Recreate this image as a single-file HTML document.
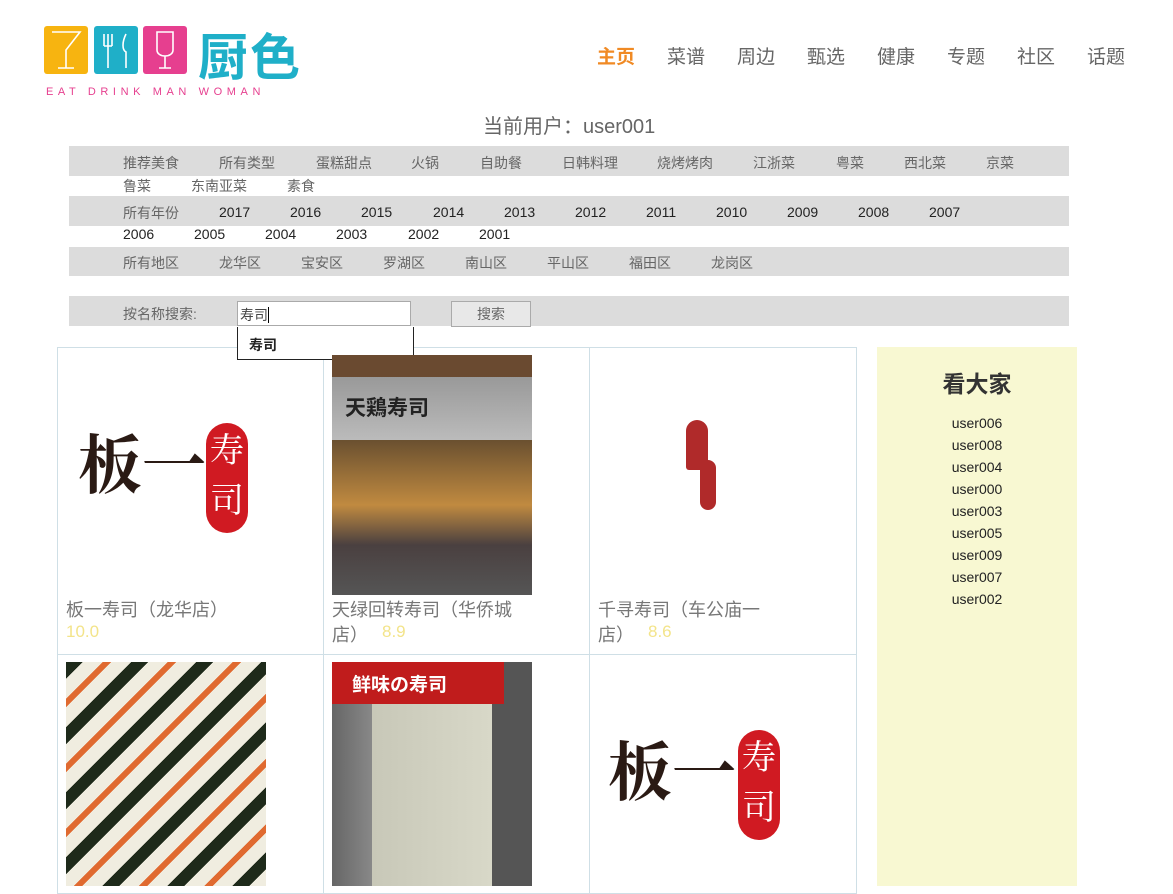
<!DOCTYPE html>
<html><head><meta charset="utf-8"><style>
*{margin:0;padding:0;box-sizing:border-box}
body{width:1173px;height:886px;overflow:hidden;background:#fff;font-family:"Liberation Sans","Noto Sans CJK SC",sans-serif;position:relative;color:#555}
.a{position:absolute;white-space:nowrap}
.bar{position:absolute;left:69px;width:1000px;background:#dcdcdc}
.f{font-size:14px;color:#666}
.n{font-size:14px;color:#222}
.nav{font-size:19px;color:#666;top:42px}
.cell{position:absolute;border:1px solid #cfdfe6}
.t{font-size:18px;color:#777}
.s{font-size:17px;color:#f3e48a}
.u{font-size:14px;color:#222;left:0;width:200px;text-align:center}
</style></head><body>
<div class="a" style="left:44px;top:26px;width:44px;height:48px;background:#f7b410;border-radius:3px"></div>
<div class="a" style="left:94px;top:26px;width:44px;height:48px;background:#1fafc8;border-radius:3px"></div>
<div class="a" style="left:143px;top:26px;width:44px;height:48px;background:#e63f8f;border-radius:3px"></div>
<svg class="a" style="left:44px;top:26px" width="143" height="48" fill="none" stroke="#fff" stroke-width="1.6">
<path d="M8 6h28L22 24v18M14 42h16"/><path d="M60 8v12M64 8v34M68 8v12M60 20h8M82 8c-4 8-4 16 0 18v16"/><path d="M113 6h16v18c0 4-4 6-8 6s-8-2-8-6zM121 30v12M115 42h12"/>
</svg>
<div class="a" style="left:198px;top:18px;font-size:50px;font-weight:bold;color:#1fafc8;letter-spacing:2px">厨色</div>
<div class="a" style="left:46px;top:86px;font-size:11px;color:#e63f8f;letter-spacing:4.6px">EAT DRINK MAN WOMAN</div>
<div class="a nav" style="left:597px;color:#f08a24;font-weight:bold">主页</div>
<div class="a nav" style="left:667px">菜谱</div>
<div class="a nav" style="left:737px">周边</div>
<div class="a nav" style="left:807px">甄选</div>
<div class="a nav" style="left:877px">健康</div>
<div class="a nav" style="left:947px">专题</div>
<div class="a nav" style="left:1017px">社区</div>
<div class="a nav" style="left:1087px">话题</div>
<div class="a" style="left:483px;top:110px;font-size:20px;color:#666">当前用户：user001</div>
<div class="bar" style="top:146px;height:30px"></div>
<div class="bar" style="top:196px;height:30px"></div>
<div class="bar" style="top:247px;height:29px"></div>
<div class="bar" style="top:296px;height:30px"></div>
<div class="a f" style="top:153px;left:123px">推荐美食</div>
<div class="a f" style="top:153px;left:219px">所有类型</div>
<div class="a f" style="top:153px;left:316px">蛋糕甜点</div>
<div class="a f" style="top:153px;left:411px">火锅</div>
<div class="a f" style="top:153px;left:480px">自助餐</div>
<div class="a f" style="top:153px;left:562px">日韩料理</div>
<div class="a f" style="top:153px;left:657px">烧烤烤肉</div>
<div class="a f" style="top:153px;left:753px">江浙菜</div>
<div class="a f" style="top:153px;left:836px">粤菜</div>
<div class="a f" style="top:153px;left:904px">西北菜</div>
<div class="a f" style="top:153px;left:986px">京菜</div>
<div class="a f" style="top:176px;left:123px">鲁菜</div>
<div class="a f" style="top:176px;left:191px">东南亚菜</div>
<div class="a f" style="top:176px;left:287px">素食</div>
<div class="a f" style="top:203px;left:123px">所有年份</div>
<div class="a n" style="top:204px;left:219px">2017</div>
<div class="a n" style="top:204px;left:290px">2016</div>
<div class="a n" style="top:204px;left:361px">2015</div>
<div class="a n" style="top:204px;left:433px">2014</div>
<div class="a n" style="top:204px;left:504px">2013</div>
<div class="a n" style="top:204px;left:575px">2012</div>
<div class="a n" style="top:204px;left:646px">2011</div>
<div class="a n" style="top:204px;left:716px">2010</div>
<div class="a n" style="top:204px;left:787px">2009</div>
<div class="a n" style="top:204px;left:858px">2008</div>
<div class="a n" style="top:204px;left:929px">2007</div>
<div class="a n" style="top:226px;left:123px">2006</div>
<div class="a n" style="top:226px;left:194px">2005</div>
<div class="a n" style="top:226px;left:265px">2004</div>
<div class="a n" style="top:226px;left:336px">2003</div>
<div class="a n" style="top:226px;left:408px">2002</div>
<div class="a n" style="top:226px;left:479px">2001</div>
<div class="a f" style="top:253px;left:123px">所有地区</div>
<div class="a f" style="top:253px;left:219px">龙华区</div>
<div class="a f" style="top:253px;left:301px">宝安区</div>
<div class="a f" style="top:253px;left:383px">罗湖区</div>
<div class="a f" style="top:253px;left:465px">南山区</div>
<div class="a f" style="top:253px;left:547px">平山区</div>
<div class="a f" style="top:253px;left:629px">福田区</div>
<div class="a f" style="top:253px;left:711px">龙岗区</div>
<div class="a f" style="top:304px;left:123px">按名称搜索:</div>
<div class="a" style="left:237px;top:301px;width:174px;height:25px;background:#fff;border:1px solid #aaa;font-size:14px;padding:3px 2px;color:#444">寿司<span style="border-left:1px solid #000"></span></div>
<div class="a" style="left:451px;top:301px;width:80px;height:26px;background:#e8e8e8;border:1px solid #aaa;font-size:14px;text-align:center;line-height:24px;color:#666">搜索</div>
<div class="cell" style="left:57px;top:347px;width:267px;height:308px"></div>
<div class="cell" style="left:323px;top:347px;width:267px;height:308px"></div>
<div class="cell" style="left:589px;top:347px;width:268px;height:308px"></div>
<div class="cell" style="left:57px;top:654px;width:267px;height:240px"></div>
<div class="cell" style="left:323px;top:654px;width:267px;height:240px"></div>
<div class="cell" style="left:589px;top:654px;width:268px;height:240px"></div>
<div class="a" style="left:237px;top:327px;width:177px;height:33px;background:#fff;border:1px solid #222;border-top:none;font-size:14px;font-weight:bold;color:#222;padding:8px 11px">寿司</div>
<div class="a" style="left:78px;top:415px;font-size:64px;font-family:'Noto Serif CJK SC',serif;font-weight:bold;color:#2a1a14">板一</div>
<div class="a" style="left:206px;top:423px;width:42px;height:110px;background:#d01a22;border-radius:21px;color:#fff;font-size:34px;line-height:50px;text-align:center;white-space:normal;font-family:'Noto Serif CJK SC',serif">寿司</div>
<div class="a" style="left:332px;top:355px;width:200px;height:240px;background:linear-gradient(#6a4a30 0,#6a4a30 22px,#999 22px,#bbb 85px,#6a5030 85px,#c08a40 150px,#4a4040 190px,#555 240px)"></div>
<div class="a" style="left:345px;top:392px;font-size:21px;color:#222;font-weight:bold">天鶏寿司</div>
<div class="a" style="left:686px;top:420px;width:22px;height:50px;background:#b02a2a;border-radius:11px 11px 3px 3px"></div>
<div class="a" style="left:700px;top:460px;width:16px;height:50px;background:#b02a2a;border-radius:8px"></div>
<div class="a" style="left:66px;top:662px;width:200px;height:224px;background:repeating-linear-gradient(135deg,#1e2a1a 0,#1e2a1a 12px,#f0ede0 12px,#f0ede0 26px,#e06a30 26px,#e06a30 32px,#f0ede0 32px,#f0ede0 46px)"></div>
<div class="a" style="left:332px;top:662px;width:200px;height:224px;background:linear-gradient(90deg,#666 0,#888 40px,#c8c8b8 40px,#d8d8c8 160px,#555 160px)"></div>
<div class="a" style="left:332px;top:662px;width:172px;height:42px;background:#c01c1c;color:#fff;font-size:19px;padding:8px 20px;font-weight:bold">鲜味の寿司</div>
<div class="a" style="left:608px;top:722px;font-size:64px;font-family:'Noto Serif CJK SC',serif;font-weight:bold;color:#2a1a14">板一</div>
<div class="a" style="left:738px;top:730px;width:42px;height:110px;background:#d01a22;border-radius:21px;color:#fff;font-size:34px;line-height:50px;text-align:center;white-space:normal;font-family:'Noto Serif CJK SC',serif">寿司</div>
<div class="a t" style="left:66px;top:596px">板一寿司（龙华店）</div>
<div class="a s" style="left:66px;top:622px">10.0</div>
<div class="a t" style="left:332px;top:596px">天绿回转寿司（华侨城</div>
<div class="a t" style="left:332px;top:621px">店）</div><div class="a s" style="left:382px;top:622px">8.9</div>
<div class="a t" style="left:598px;top:596px">千寻寿司（车公庙一</div>
<div class="a t" style="left:598px;top:621px">店）</div><div class="a s" style="left:648px;top:622px">8.6</div>
<div class="a" style="left:877px;top:347px;width:200px;height:539px;background:#f8f8d2">
<div class="a" style="top:18px;left:0;width:200px;text-align:center;font-size:23px;font-weight:bold;color:#333">看大家</div>
<div class="a u" style="top:68px">user006</div>
<div class="a u" style="top:90px">user008</div>
<div class="a u" style="top:112px">user004</div>
<div class="a u" style="top:134px">user000</div>
<div class="a u" style="top:156px">user003</div>
<div class="a u" style="top:178px">user005</div>
<div class="a u" style="top:200px">user009</div>
<div class="a u" style="top:222px">user007</div>
<div class="a u" style="top:244px">user002</div>
</div>
</body></html>
